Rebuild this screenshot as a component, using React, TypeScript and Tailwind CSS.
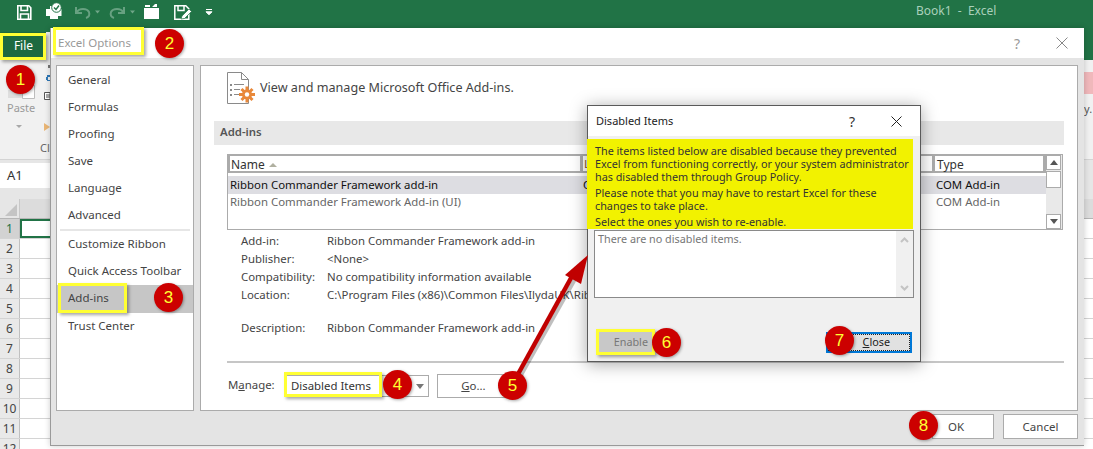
import React from "react";

const font = { fontFamily: '"Noto Sans", "Open Sans", sans-serif' };

function Badge({ n, className }: { n: string; className: string }) {
  return (
    <div className={"absolute z-40 flex h-[29px] w-[29px] items-center justify-center rounded-full bg-[#cc0000] text-[17px] leading-none text-[#ffff33] shadow-[1px_1px_3px_rgba(0,0,0,0.35)] [font-family:'Liberation_Sans',sans-serif] " + className}>
      {n}
    </div>
  );
}

function Hi({ className }: { className: string }) {
  return <div className={"absolute z-30 border-[3px] border-[#ffff33] shadow-[2px_2px_3px_rgba(0,0,0,0.35)] " + className} />;
}

function Qat() {
  return (
    <svg width="220" height="24" viewBox="0 0 220 24" fill="none" className="absolute left-0 top-0">
      <g stroke="#fff" strokeWidth="1.6">
        <path d="M17.8 5.8h11l2 2v11.4H17.8z" />
        <path d="M21 6v4.5h6.5V6" />
        <path d="M20.5 19v-5h8v5" />
      </g>
      <g>
        <path d="M46 9h4V6h8v3h3.5v7H58v3h-8v-3h-4z" fill="#fff" />
        <circle cx="56.5" cy="7.5" r="4.8" fill="#fff" stroke="#217346" />
        <path d="M54 7.5l2 2 3-4" stroke="#217346" strokeWidth="1.4" />
      </g>
      <g stroke="#6fa688" strokeWidth="2" opacity="0.9">
        <path d="M77 12c2-4 10-4 12 0 1 3 0 5-3 6" />
        <path d="M76 7v6h6" />
        <path d="M123 12c-2-4-10-4-12 0-1 3 0 5 3 6" />
        <path d="M124 7v6h-6" />
      </g>
      <path d="M95 10.5h5l-2.5 3zM130 10.5h5l-2.5 3z" fill="#6fa688" />
      <path d="M144 8h15v11h-15z" fill="#fff" />
      <path d="M145 7h5v-2h-5zM152 7l3-3h2v3z" fill="#fff" />
      <g stroke="#fff" strokeWidth="1.5">
        <path d="M174.8 5.8h11l3 3v10.4h-14z" />
        <path d="M178 6v4.5h6V6" />
      </g>
      <path d="M181 19l1-3 7-7 2.5 2.5-7 7z" fill="#fff" stroke="#217346" strokeWidth="0.7" />
      <path d="M206 9.5h6M206 11.8h6l-3 3z" stroke="#fff" fill="#fff" strokeWidth="1" />
    </svg>
  );
}

function RibbonScraps() {
  return (
    <svg width="50" height="40" viewBox="0 0 50 40" fill="none" className="block">
      <rect x="8" y="30" width="14" height="8" fill="#dedede" />
      <path d="M22.5 25.5h12v13h-12z" fill="#fff" stroke="#bdbdbd" />
      <path d="M48 5h2v3h-2z" fill="#777" />
      <path d="M50 15h-3v2h-1v3h1v1h3v-1h-2v-3h2z" fill="#2f78b7" />
      <path d="M44.5 32.5h5.5v7h-5.5z" fill="#fff" stroke="#555" />
      <path d="M46 35h4M46 37h4" stroke="#555" />
    </svg>
  );
}

function Backdrop() {
  return (
    <div className="flex h-full w-full flex-col bg-white">
      <div className="relative h-[32px] shrink-0 bg-[#217346]">
        <Qat />
        <div className="absolute left-[916px] top-[2px] text-[12px] text-[#a9d0ba]">Book1 &nbsp;-&nbsp; Excel</div>
      </div>
      <div className="flex h-[28px] shrink-0 bg-[#217346]">
        <div className="flex w-[46px] items-center justify-center bg-[#1d6a40] pl-[1px] text-[12px] text-white">File</div>
        <div className="w-[4px] bg-[#f2f2f2]" />
      </div>
      <div className="flex h-[100px] shrink-0 border-b border-[#d4d4d4] bg-[#f1f1f1]">
        <div className="w-[50px] text-[#9a9a9a]">
          <RibbonScraps />
          <div className="ml-[7px] h-[16px] text-[11px] leading-[16px]">Paste</div>
          <div className="ml-[16px] mt-[7px] flex justify-between">
            <span className="mt-[2px] h-0 w-0 border-x-[3px] border-t-[3px] border-x-transparent border-t-[#a8a8a8]" />
            <span className="h-0 w-0 border-y-[4px] border-l-[6px] border-y-transparent border-l-[#eab675]" />
          </div>
          <div className="ml-[40px] mt-[9px] text-[11px] text-[#666]">Cl</div>
        </div>
        <div className="ml-auto w-[9px] pt-[12px]">
          <div className="h-[22px] bg-[#f0b8bb]" />
          <div className="mt-[7px] text-[11px] text-[#555]">y.</div>
        </div>
      </div>
      <div className="flex h-[39px] shrink-0 bg-[#e6e6e6]">
        <div className="mt-[3px] flex h-[25px] w-[50px] items-center bg-white pl-[7px] text-[13px] text-[#333]">A1</div>
      </div>
      <div className="flex h-[20px] shrink-0 border-b border-[#b5b5b5] bg-[#e6e6e6]">
        <div className="flex w-[20px] items-end justify-end border-r border-[#c8c8c8] p-[2px]">
          <span className="h-0 w-0 border-b-[12px] border-l-[12px] border-b-[#c4c4c4] border-l-transparent" />
        </div>
        <div className="flex-1 bg-[#dcdcdc]" />
      </div>
      <div className="flex flex-1 flex-col overflow-hidden">
        {["1", "2", "3", "4", "5", "6", "7", "8", "9", "10", "11", "12"].map((r, i) => (
          <div key={r} className="flex h-[20px] shrink-0 border-b border-[#d4d4d4]">
            <div className={"flex w-[20px] shrink-0 items-center justify-center border-r border-[#c0c0c0] text-[12px] " + (i === 0 ? "bg-[#d2d2d2] text-[#217346]" : "bg-[#e9e9e9] text-[#444]")}>{r}</div>
            <div className={i === 0 ? "w-[32px] border-2 border-[#217346]" : "w-[32px]"} />
          </div>
        ))}
      </div>
    </div>
  );
}

const menuTop = ["General", "Formulas", "Proofing", "Save", "Language", "Advanced"];
const details: [string, string, string][] = [
  ["Add-in:", "Ribbon Commander Framework add-in", "h-[18px]"],
  ["Publisher:", "<None>", "h-[18px]"],
  ["Compatibility:", "No compatibility information available", "h-[18px]"],
  ["Location:", "C:\\Program Files (x86)\\Common Files\\IlydaUK\\Ribbon Commander", "h-[33px]"],
  ["Description:", "Ribbon Commander Framework add-in", "h-[18px]"],
];

function MenuItem({ label, active }: { label: string; active?: boolean }) {
  return <div className={"flex items-center pb-[2px] pl-[11px] " + (active ? "h-[28px] bg-[#c6c6c6]" : "h-[27px]")}>{label}</div>;
}

function SheetIcon() {
  return (
    <svg width="30" height="34" viewBox="0 0 30 34" fill="none">
      <path d="M0.5 0.5h14l7 7v24h-21z" stroke="#8a8a8a" fill="#fff" />
      <path d="M14.5 0.5v7h7" stroke="#8a8a8a" />
      <g fill="#8a8a8a">
        <rect x="3" y="12" width="2" height="2" />
        <rect x="3" y="17" width="2" height="2" />
        <rect x="3" y="22" width="2" height="2" />
        <rect x="7" y="12" width="10" height="1" />
        <rect x="7" y="17" width="6" height="1" />
        <rect x="7" y="22" width="5" height="1" />
      </g>
      <g stroke="#e8883a" strokeWidth="3">
        <path d="M20 14.5v16M12 22.5h16M14.5 17l11 11M25.5 17l-11 11" />
      </g>
      <circle cx="20" cy="22.5" r="5" fill="#e8883a" />
      <circle cx="20" cy="22.5" r="2.2" fill="#fff" />
    </svg>
  );
}

function ScrollArrow({ up }: { up?: boolean }) {
  return (
    <div className="flex h-[15px] w-[15px] items-center justify-center border border-[#ababab] bg-white">
      <div className={"h-0 w-0 border-x-[4px] border-x-transparent " + (up ? "border-b-[5px] border-b-[#555]" : "border-t-[5px] border-t-[#555]")} />
    </div>
  );
}

function AddinList() {
  return (
    <div className="ml-[26px] mt-[9px] flex h-[76px] w-[836px] border border-[#ababab] bg-white text-[11.4px]">
      <div className="flex w-[819px] flex-col">
        <div className="flex h-[18px] gap-[3px] bg-[#ababab] p-[1px_3px_2px_2px]">
          <div className="flex w-[350px] items-center gap-[4px] bg-white pl-[1px] pt-[2px] text-[12px] text-[#333]">
            Name <span className="h-0 w-0 border-x-[4px] border-b-[4px] border-x-transparent border-b-[#b0b0a0]" />
          </div>
          <div className="w-[349px] bg-white pl-[1px] leading-[15px] text-[#8a5a2a]">Location</div>
          <div className="flex flex-1 items-center bg-white pl-[2px] pt-[2px] text-[12px] text-[#333]">Type</div>
        </div>
        <div className="mt-[3px] flex h-[18px] items-center bg-[#dddde2] pl-[2px] text-[#111]">
          <span className="w-[353px]">Ribbon Commander Framework add-in</span>
          <span className="w-[353px]">C:\Program Files</span>
          <span>COM Add-in</span>
        </div>
        <div className="flex h-[16px] items-center pl-[2px] text-[#666]">
          <span className="w-[706px]">Ribbon Commander Framework Add-in (UI)</span>
          <span>COM Add-in</span>
        </div>
      </div>
      <div className="flex w-[16px] flex-col bg-[#e9e9e9]">
        <ScrollArrow up />
        <div className="mt-[1px] h-[17px] w-[15px] border border-[#ababab] bg-white" />
        <div className="flex-1" />
        <ScrollArrow />
      </div>
    </div>
  );
}

function MainPanel() {
  return (
    <div className="relative flex w-[878px] flex-col border border-[#ababab] bg-white text-[11.4px] text-[#444]">
      <div className="ml-[26px] mt-[6px] flex h-[34px] items-start gap-[3px]">
        <SheetIcon />
        <div className="mt-[7px] text-[12.6px]">View and manage Microsoft Office Add-ins.</div>
      </div>
      <div className="ml-[13px] mt-[15px] flex h-[24px] w-[850px] items-center bg-[#e8e8e8] pb-[2px] pl-[6px] font-semibold text-[#555]">Add-ins</div>
      <AddinList />
      <div className="ml-[40px] mt-[2px] flex flex-col">
        {details.map(([k, v, h]) => (
          <div key={k} className={"flex " + h}>
            <span className="w-[86px] shrink-0">{k}</span>
            <span className="whitespace-nowrap">{v}</span>
          </div>
        ))}
      </div>
      <div className="ml-[26px] mt-[24px] h-[2px] w-[837px] bg-[#c6c6c6]" />
      <div className="ml-[27px] mt-[11px] flex items-center">
        <span className="w-[56px] pb-[2px]">M<u>a</u>nage:</span>
        <div className="flex h-[22px] w-[145px] items-center justify-between border border-[#ababab] pl-[6px] pr-[4px] text-[#333]">
          <span className="pb-[1px]">Disabled Items</span>
          <span className="h-0 w-0 border-x-[4px] border-t-[5px] border-x-transparent border-t-[#777]" />
        </div>
        <div className="ml-[8px] flex h-[24px] w-[73px] items-center justify-center border border-[#ababab] pb-[1px]"><span><u>G</u>o...</span></div>
      </div>
    </div>
  );
}

function OptionsDialog() {
  return (
    <div className="absolute left-[50px] top-[28px] z-10 flex h-[418px] w-[1034px] flex-col border-b border-l border-[#9a9a9a] bg-[#e4e4e4] shadow-[0_0_6px_rgba(0,0,0,0.2)]">
      <div className="flex h-[30px] shrink-0 items-center bg-white pl-[7px] text-[#999]">
        <span className="text-[11.5px]">Excel Options</span>
        <span className="ml-auto mr-[36px] text-[14px] text-[#999]">?</span>
        <svg width="12" height="12" viewBox="0 0 12 12" className="mr-[16px]"><path d="M0.5 0.5l11 11M11.5 0.5l-11 11" stroke="#888" strokeWidth="1" /></svg>
      </div>
      <div className="mt-[7px] flex h-[346px] shrink-0 gap-[6px] pl-[5px]">
        <div className="flex w-[138px] flex-col border border-[#ababab] bg-white pt-[1px] text-[11.5px] text-[#444]">
          {menuTop.map((m) => <MenuItem key={m} label={m} />)}
          <div className="mx-[3px] h-[2px] bg-[#e6e6e6]" />
          <MenuItem label="Customize Ribbon" />
          <MenuItem label="Quick Access Toolbar" />
          <MenuItem label="Add-ins" active />
          <MenuItem label="Trust Center" />
        </div>
        <MainPanel />
      </div>
      <div className="mt-[3px] flex justify-end gap-[9px] pr-[6px] text-[11.5px] text-[#444]">
        <div className="flex h-[25px] w-[62px] items-center justify-center border border-[#ababab] bg-white pr-[14px]">OK</div>
        <div className="flex h-[25px] w-[75px] items-center justify-center border border-[#ababab] bg-white">Cancel</div>
      </div>
    </div>
  );
}

function DisabledDialog() {
  return (
    <div className="absolute left-[587px] top-[105px] z-20 flex h-[257px] w-[334px] flex-col border border-[#5a5a5a] bg-[#f0f0f0] shadow-[0_2px_16px_rgba(0,0,0,0.35)]">
      <div className="flex h-[30px] shrink-0 items-center bg-white pl-[8px] text-[11px] text-[#222]">
        <span>Disabled Items</span>
        <span className="ml-auto mr-[36px] text-[14px] text-[#333]">?</span>
        <svg width="11" height="11" viewBox="0 0 11 11" className="mr-[18px]"><path d="M0.5 0.5l10 10M10.5 0.5l-10 10" stroke="#222" strokeWidth="1" /></svg>
      </div>
      <div className="-ml-px mt-[3px] h-[90px] w-[326px] shrink-0 whitespace-nowrap bg-[#f2f200] pl-[8px] pt-[5px] text-[10.8px] leading-[13px] text-[#333]">
        <p>The items listed below are disabled because they prevented</p>
        <p>Excel from functioning correctly, or your system administrator</p>
        <p>has disabled them through Group Policy.</p>
        <p className="mt-[3px]">Please note that you may have to restart Excel for these</p>
        <p>changes to take place.</p>
        <p className="mt-[3px]">Select the ones you wish to re-enable.</p>
      </div>
      <div className="ml-[6px] mt-[1px] flex h-[68px] w-[320px] shrink-0 justify-between border border-[#8a8a8a] bg-white text-[10.8px] text-[#777]">
        <span className="pl-[3px]">There are no disabled items.</span>
        <div className="flex w-[17px] flex-col items-center justify-between bg-[#f0f0f0] py-[6px] text-[#c4c4c4]">
          <svg width="9" height="6" viewBox="0 0 9 6"><path d="M1 5l3.5-3.5L8 5" fill="none" stroke="currentColor" strokeWidth="2" /></svg>
          <svg width="9" height="6" viewBox="0 0 9 6"><path d="M1 1l3.5 3.5L8 1" fill="none" stroke="currentColor" strokeWidth="2" /></svg>
        </div>
      </div>
      <div className="ml-[9px] mt-[33px] flex w-[315px] items-center justify-between text-[10.8px]">
        <div className="flex h-[22px] w-[56px] items-center justify-end bg-[#c8c8c8] pr-[5px] text-[#777]">Enable</div>
        <div className="flex h-[21px] w-[86px] items-center justify-end border-2 border-[#0078d7] bg-[#e1e1e1] pr-[20px] text-[#222] outline-1 -outline-offset-3 outline-dotted outline-[#222]"><span><u>C</u>lose</span></div>
      </div>
    </div>
  );
}

function Arrow() {
  return (
    <svg width="100" height="150" viewBox="0 0 100 150" className="absolute left-[505px] top-[245px] z-30 overflow-visible">
      <path d="M9 137L72 25" stroke="#000" strokeOpacity="0.25" strokeWidth="4" transform="translate(2 2)" />
      <path d="M7 140L71 24" stroke="#c00000" strokeWidth="4.5" />
      <path d="M83 10L60 30L76 39z" fill="#c00000" />
    </svg>
  );
}

export default function App() {
  return (
    <div className="relative h-[449px] w-[1093px] overflow-hidden" style={font}>
      <Backdrop />
      <OptionsDialog />
      <DisabledDialog />
      <Arrow />
      <Hi className="left-0 top-[33px] h-[27px] w-[46px]" />
      <Hi className="left-[53px] top-[27px] h-[28px] w-[91px]" />
      <Hi className="left-[58px] top-[283px] h-[30px] w-[69px]" />
      <Hi className="left-[284px] top-[372px] h-[25px] w-[98px]" />
      <Hi className="left-[596px] top-[329px] h-[26px] w-[59px]" />
      <Badge n="1" className="left-[6px] top-[65px]" />
      <Badge n="2" className="left-[155px] top-[29px]" />
      <Badge n="3" className="left-[154px] top-[283px]" />
      <Badge n="4" className="left-[383px] top-[370px]" />
      <Badge n="5" className="left-[498px] top-[371px]" />
      <Badge n="6" className="left-[652px] top-[328px]" />
      <Badge n="7" className="left-[825px] top-[326px]" />
      <Badge n="8" className="left-[909px] top-[411px]" />
    </div>
  );
}
